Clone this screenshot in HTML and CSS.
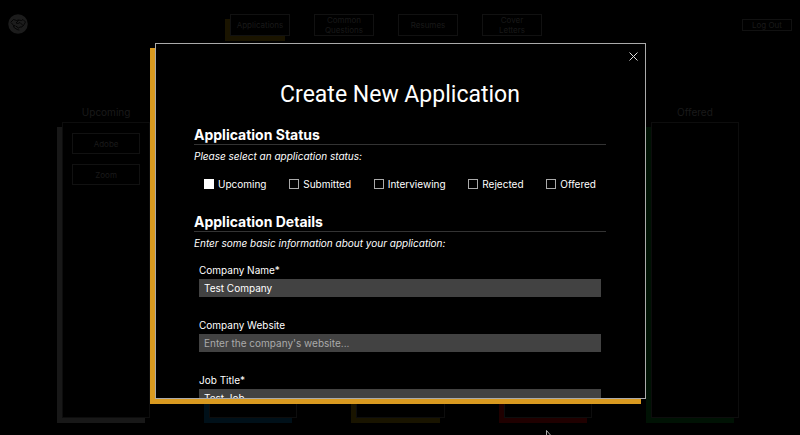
FILE: index.html
```html
<!DOCTYPE html>
<html lang="en">
<head>
<meta charset="utf-8">
<meta name="viewport" content="width=device-width, initial-scale=1">
<title>Applications</title>
<link rel="stylesheet" href="styles.css">
</head>
<body>
<div class="page">
  <header class="topbar">
    <a class="logo" href="#" aria-label="Home">
      <svg viewBox="0 0 40 40" width="20" height="20" aria-hidden="true">
        <circle cx="20" cy="20" r="19.5" fill="#1c1c1c"/>
        <g fill="none" stroke="#000" stroke-width="1.6" stroke-linejoin="round" stroke-linecap="round">
          <path d="M6 16l5-5 6 2 4-1 6 1 3-2 5 5-4 7"/>
          <path d="M7 18l5 6M21 13l-5 5 4 1 4-2 6 6-2 3-4 0-3 2"/>
          <path d="M12 24l2-1 2 2 2 0 2 3M11 25l2 3 4 2M18 31l4 1"/>
        </g>
      </svg>
    </a>
    <nav class="nav">
      <a class="tab tab-active" href="#">Applications</a>
      <a class="tab" href="#">Common Questions</a>
      <a class="tab" href="#">Resumes</a>
      <a class="tab" href="#">Cover Letters</a>
    </nav>
    <button class="logout" type="button">Log Out</button>
  </header>
  <main class="board">
    <section class="column gray"><h2>Upcoming</h2><div class="lane"><button class="card" type="button">Adobe</button><button class="card" type="button">Zoom</button></div></section>
    <section class="column blue"><div class="lane"></div></section>
    <section class="column yellow"><div class="lane"></div></section>
    <section class="column red"><div class="lane"></div></section>
    <section class="column green"><h2>Offered</h2><div class="lane"></div></section>
  </main>
</div>

<div class="overlay">
  <form class="modal" role="dialog" aria-labelledby="title">
    <button class="close" type="button" aria-label="Close">
      <svg viewBox="0 0 9 9" width="9" height="9" aria-hidden="true"><path d="M.5.5l8 8M8.5.5l-8 8" stroke="#ddd" stroke-width="1"/></svg>
    </button>
    <h1 id="title">Create New Application</h1>
    <section class="group">
      <h2>Application Status</h2>
      <p>Please select an application status:</p>
      <div class="choices">
        <label><input type="checkbox" checked>Upcoming</label>
        <label><input type="checkbox">Submitted</label>
        <label><input type="checkbox">Interviewing</label>
        <label><input type="checkbox">Rejected</label>
        <label><input type="checkbox">Offered</label>
      </div>
    </section>
    <section class="group">
      <h2>Application Details</h2>
      <p>Enter some basic information about your application:</p>
      <div class="fields">
        <div class="field"><label for="name">Company Name*</label><input id="name" type="text" value="Test Company"></div>
        <div class="field"><label for="site">Company Website</label><input id="site" type="text" placeholder="Enter the company's website..."></div>
        <div class="field"><label for="job">Job Title*</label><input id="job" type="text" value="Test Job"></div>
      </div>
    </section>
  </form>
</div>
<svg class="cursor" viewBox="0 0 8 12" width="8" height="12" aria-hidden="true"><path d="M.5.5v10l2.5-2.5h4z" fill="#000" stroke="#aaa"/></svg>
</body>
</html>
```

FILE: styles.css
```css
* { box-sizing: border-box; }
body {
  margin: 0;
  height: 100vh;
  overflow: hidden;
  background: #000;
  color: #fff;
  font-family: Inter, "Liberation Sans", sans-serif;
  font-size: 10px;
  line-height: 12px;
}
h1, h2, p { margin: 0; }
a { text-decoration: none; }
button, input { font: inherit; color: inherit; border-radius: 0; }

.page {
  height: 100%;
  display: flex;
  flex-direction: column;
  color: #1a1a1a;
}
.topbar {
  display: grid;
  grid-template-columns: 1fr auto 1fr;
  align-items: center;
  padding: 14px 8px 0;
}
.logo { display: flex; align-self: start; }
.nav { display: flex; gap: 24px; margin-right: 28px; }
.tab {
  width: 60px;
  height: 22px;
  padding: 0 6px;
  display: flex;
  align-items: center;
  justify-content: center;
  text-align: center;
  border: 1px solid #111;
  color: #191919;
  background: #000;
  font-size: 8px;
  line-height: 10px;
}
.tab-active { box-shadow: -5px 5px #1a1400; }
.logout {
  justify-self: end;
  width: 50px;
  height: 12px;
  padding: 0;
  background: #000;
  border: 1px solid #111;
  font-size: 8px;
  line-height: 10px;
}
.board {
  flex: 1;
  display: grid;
  grid-template-columns: repeat(5, 1fr);
  gap: 59px;
  padding: 68px 61px 17px 62px;
}
.column {
  display: flex;
  flex-direction: column;
  justify-content: flex-end;
}
.column h2 {
  font-size: 10px;
  font-weight: 400;
  line-height: 16px;
  text-align: center;
}
.lane {
  flex: 1;
  display: flex;
  flex-direction: column;
  gap: 10px;
  padding: 10px 9px;
  background: #000;
  border: 1px solid #0d0d0d;
}
.column h2 + .lane { margin-top: 2px; }
.card {
  height: 21px;
  padding: 0;
  background: #000;
  border: 1px solid #111;
  font-size: 8px;
}
.gray .lane { box-shadow: -5px 5px #181818; }
.blue .lane { box-shadow: -5px 5px #001019; }
.yellow .lane { box-shadow: -5px 5px #191400; }
.red .lane { box-shadow: -5px 5px #1f0000; }
.green .lane { box-shadow: -5px 5px #001204; }

.overlay {
  position: absolute;
  inset: 0;
  display: flex;
  justify-content: center;
  padding: 43px 154px 36px 155px;
}
.modal {
  position: relative;
  flex: 1;
  overflow: hidden;
  padding: 36px 39px 0 38px;
  background: #000;
  border: 1px solid #aaa;
  box-shadow: -5px 5px #d99a20;
}
.close {
  position: absolute;
  top: 6px;
  right: 5px;
  display: flex;
  padding: 2px;
  background: none;
  border: 0;
}
h1 {
  font-family: Roboto, Inter, sans-serif;
  font-size: 23px;
  font-weight: 400;
  line-height: 30px;
  text-align: center;
}
.group { margin-top: 16px; }
.group h2 {
  border-bottom: 1px solid #333;
  font-size: 14px;
  font-weight: 700;
  line-height: 18px;
}
.group p { margin-top: 5px; font-style: italic; }
.choices {
  display: flex;
  justify-content: space-between;
  padding: 16px 10px 7px;
}
.choices label { display: flex; align-items: center; gap: 4px; }
.choices input {
  appearance: none;
  width: 10px;
  height: 10px;
  margin: 0;
  border: 1px solid #aaa;
}
.choices input:checked { background: #fff; border-color: #fff; }
.fields {
  display: flex;
  flex-direction: column;
  gap: 22px;
  padding: 15px 5px 0;
}
.field { display: flex; flex-direction: column; gap: 3px; }
.field input {
  width: 100%;
  height: 18px;
  padding: 0 5px;
  background: #424242;
  border: 0;
  outline: 0;
}
.field input::placeholder { color: #aaa; opacity: 1; }
.cursor { position: absolute; left: 546px; top: 430px; }
```
